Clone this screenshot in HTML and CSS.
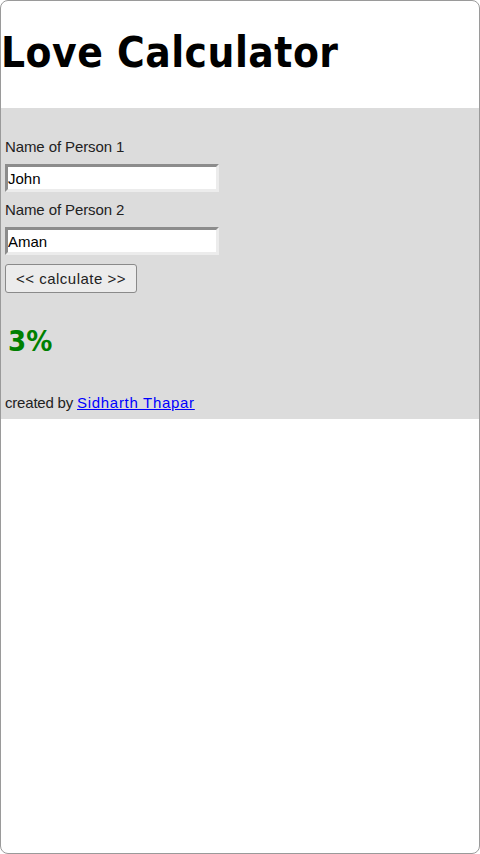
FILE: index.html
```html
<!DOCTYPE html>
<html lang="en">
<head>
    <meta charset="UTF-8" />
    <meta name="viewport" content="width=device-width, initial-scale=1.0" />
    <title>Love Calculator</title>
    <link rel="stylesheet" href="styles.css">
</head>
<body>
    <div class="frame">
        <h1 class="title">Love Calculator</h1>

        <!-- form area -->
        <div class="panel">
            <label class="label" for="p1">Name of Person 1</label>
            <input class="field" id="p1" type="text" value="John" />
            <label class="label" for="p2">Name of Person 2</label>
            <input class="field" id="p2" type="text" value="Aman" />
            <button class="calc" type="button">&lt;&lt; calculate &gt;&gt;</button>

            <div class="result">3%</div>

            <p class="credit">created by <a href="#">Sidharth Thapar</a></p>
        </div>
    </div>
</body>
</html>
```
FILE: styles.css
```css
body {
    margin: 0;
    background: #fff;
}

.frame {
    box-sizing: border-box;
    height: 854px;
    border: 1px solid #9a9a9a;
    border-radius: 8px;
    overflow: hidden;
}

.title {
    margin: 0;
    padding: 27px 0 0 0;
    height: 80px;
    font-family: "DejaVu Sans Condensed", "DejaVu Sans", sans-serif;
    font-stretch: condensed;
    font-size: 42px;
    font-weight: bold;
    letter-spacing: 0.5px;
    line-height: 50px;
    color: #000;
}

.panel {
    background: #dcdcdc;
    padding: 28px 0 0 4px;
    height: 283px;
    display: flex;
    flex-direction: column;
    align-items: flex-start;
    font-family: "Liberation Sans", Arial, sans-serif;
    font-size: 15px;
    color: #222;
}

.label {
    display: block;
    line-height: 22px;
    margin-bottom: 6px;
    letter-spacing: -0.1px;
}

.field {
    box-sizing: border-box;
    width: 214px;
    height: 28px;
    margin: 0 0 7px 0;
    padding: 0;
    border: 3px solid #8c8c8c;
    border-right-color: #ececec;
    border-bottom-color: #ececec;
    background: #fff;
    font-family: "Liberation Sans", Arial, sans-serif;
    font-size: 15px;
    color: #000;
}

.calc {
    margin-top: 2px;
    height: 29px;
    width: 132px;
    padding: 0;
    border: 1px solid #8a8a8a;
    border-radius: 3px;
    background: #ececec;
    font-family: "Liberation Sans", Arial, sans-serif;
    font-size: 15px;
    letter-spacing: 0.5px;
    color: #222;
}

.result {
    margin-top: 31px;
    font-family: "DejaVu Sans Condensed", "DejaVu Sans", sans-serif;
    font-stretch: condensed;
    font-size: 29px;
    font-weight: bold;
    color: #008000;
    padding-left: 3px;
}

.credit {
    margin: 35px 0 0 0;
    line-height: 20px;
    letter-spacing: -0.2px;
}

.credit a {
    color: #0000ff;
    letter-spacing: 0.7px;
}
```
